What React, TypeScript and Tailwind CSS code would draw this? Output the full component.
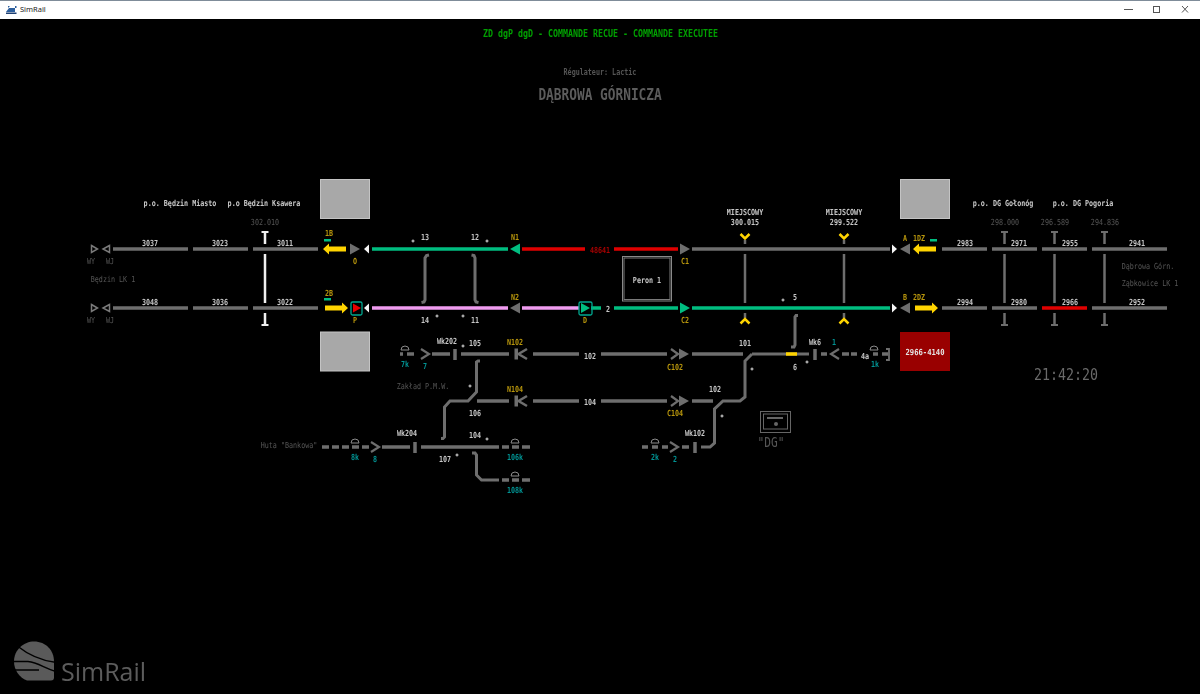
const TRACK = '#6e6e6e'
const GREEN = '#00bd80'
const PINK = '#f09cf0'
const RED = '#e00000'
const YEL = '#ffd400'
const GOLD = '#b8960c'
const TEAL = '#009494'
const DIM = '#565656'
const LIGHT = '#c8c8c8'

// x1, x2, y, colour
const segments: [number, number, number, string][] = [
  [113, 188, 249, TRACK], [193, 248, 249, TRACK], [253, 318, 249, TRACK],
  [113, 188, 308, TRACK], [193, 248, 308, TRACK], [253, 318, 308, TRACK],
  [372, 508, 249, GREEN], [522, 585, 249, RED], [614, 678, 249, RED], [692, 890, 249, TRACK],
  [372, 508, 308, PINK], [522, 579, 308, PINK], [591, 601, 308, GREEN], [614, 678, 308, GREEN], [692, 890, 308, GREEN],
  [942, 987, 249, TRACK], [992, 1037, 249, TRACK], [1042, 1087, 249, TRACK], [1092, 1167, 249, TRACK],
  [942, 987, 308, TRACK], [992, 1037, 308, TRACK], [1042, 1087, 308, RED], [1092, 1167, 308, TRACK],
  [432, 450, 354, TRACK], [461, 509, 354, TRACK], [533, 579, 354, TRACK], [601, 667, 354, TRACK], [692, 743, 354, TRACK],
  [477, 509, 401, TRACK], [533, 579, 401, TRACK], [601, 667, 401, TRACK], [692, 713, 401, TRACK],
  [382, 410, 447, TRACK], [421, 499, 447, TRACK], [682, 689, 447, TRACK],
  // dashes
  [400, 403, 354, TRACK], [407, 414, 354, TRACK],
  [322, 329, 447, TRACK], [332, 339, 447, TRACK], [342, 349, 447, TRACK], [352, 359, 447, TRACK], [362, 369, 447, TRACK],
  [502, 509, 447, TRACK], [512, 519, 447, TRACK], [522, 530, 447, TRACK],
  [502, 509, 480, TRACK], [512, 519, 480, TRACK], [522, 530, 480, TRACK],
  [642, 648, 447, TRACK], [652, 658, 447, TRACK], [662, 668, 447, TRACK],
  [821, 827, 354, TRACK], [842, 849, 354, TRACK], [851, 857, 354, TRACK], [873, 878, 354, TRACK], [882, 888, 354, TRACK],
]

const curves = [
  'M429 255 L426.500 255.500 L425 258 V300 L424 302 L421.500 302.500',
  'M471.500 255 L474 255.500 L475 258 V300 L476 302 L478.500 302.500',
  'M752 354 H809 M752 354 L745 361 V397 L740 401 H723 L714.500 409 V443 L710 447 H701',
  'M480 361 H478 L476.500 362 V392 L468 401 H450 L444.500 407 V437 L443 438.500 H441',
  'M472 453 H475 L476.500 455 V475 L481.500 480 H499',
  'M798 315.500 H796 L795 317 V345 L794 347 H791',
]

// x1, y1, x2, y2 for the plain vertical / cross bars
const bars: [number, number, number, number, string, number][] = [
  [455, 349, 455, 360, TRACK, 3.5], [415, 442, 415, 453, TRACK, 3.5], [695, 442, 695, 453, TRACK, 3.5], [815, 349, 815, 360, TRACK, 3.5],
  [745, 254, 745, 303, TRACK, 2.5], [844, 254, 844, 303, TRACK, 2.5],
  [745, 240, 745, 244, TRACK, 2.5], [844, 240, 844, 244, TRACK, 2.5],
  [745, 313, 745, 318, TRACK, 2.5], [844, 313, 844, 318, TRACK, 2.5],
]

// x, y, text, colour, optional horizontal squeeze
const labels: [number, number, string, string, number?][] = [
  [180, 203, 'p.o. Będzin Miasto', LIGHT], [264, 203, 'p.o Będzin Ksawera', LIGHT],
  [265, 222, '302.010', DIM],
  [1003, 203, 'p.o. DG Gołonóg', LIGHT], [1083, 203, 'p.o. DG Pogoria', LIGHT],
  [1005, 222, '298.000', DIM], [1055, 222, '296.589', DIM], [1105, 222, '294.836', DIM],
  [91, 261, 'WY', DIM], [110, 261, 'WJ', DIM], [91, 320, 'WY', DIM], [110, 320, 'WJ', DIM],
  [113, 279, 'Będzin LK 1', DIM],
  [1148, 266, 'Dąbrowa Górn.', DIM], [1150, 283, 'Ząbkowice LK 1', DIM],
  [150, 243, '3037', LIGHT], [220, 243, '3023', LIGHT], [285, 243, '3011', LIGHT],
  [150, 302, '3048', LIGHT], [220, 302, '3036', LIGHT], [285, 302, '3022', LIGHT],
  [965, 243, '2983', LIGHT], [1019, 243, '2971', LIGHT], [1070, 243, '2955', LIGHT], [1137, 243, '2941', LIGHT],
  [965, 302, '2994', LIGHT], [1019, 302, '2980', LIGHT], [1070, 302, '2966', LIGHT], [1137, 302, '2952', LIGHT],
  [329, 233, '1B', GOLD], [329, 293, '2B', GOLD], [355, 261, 'O', GOLD], [355, 320, 'P', GOLD],
  [515, 237, 'N1', GOLD], [515, 297, 'N2', GOLD], [585, 320, 'D', GOLD], [685, 261, 'C1', GOLD], [685, 320, 'C2', GOLD],
  [905, 238, 'A', GOLD], [919, 238, '1DZ', GOLD], [905, 297, 'B', GOLD], [919, 297, '2DZ', GOLD],
  [425, 237, '13', LIGHT], [475, 237, '12', LIGHT], [425, 320, '14', LIGHT], [475, 320, '11', LIGHT],
  [600, 250, '48641', '#a80000'], [608, 309, '2', LIGHT], [795, 297, '5', LIGHT],
  [647, 280, 'Peron 1', LIGHT],
  [745, 212, 'MIEJSCOWY', LIGHT], [745, 222, '300.015', LIGHT], [844, 212, 'MIEJSCOWY', LIGHT], [844, 222, '299.522', LIGHT],
  [447, 341, 'Wk202', LIGHT], [475, 343, '105', LIGHT], [515, 342, 'N102', GOLD], [515, 389, 'N104', GOLD],
  [405, 364, '7k', TEAL], [425, 366, '7', TEAL],
  [423, 386, 'Zakład P.M.W.', DIM], [475, 413, '106', LIGHT],
  [289, 445, 'Huta "Bankowa"', DIM], [407, 433, 'Wk204', LIGHT], [475, 435, '104', LIGHT], [445, 459, '107', LIGHT],
  [355, 457, '8k', TEAL], [375, 459, '8', TEAL], [515, 457, '106k', TEAL], [515, 490, '108k', TEAL],
  [590, 356, '102', LIGHT], [590, 402, '104', LIGHT], [675, 367, 'C102', GOLD], [675, 413, 'C104', GOLD],
  [745, 343, '101', LIGHT], [715, 389, '102', LIGHT], [695, 433, 'Wk102', LIGHT],
  [655, 457, '2k', TEAL], [675, 459, '2', TEAL],
  [815, 342, 'Wk6', LIGHT], [834, 342, '1', TEAL], [795, 367, '6', LIGHT], [865, 356, '4a', LIGHT], [875, 364, '1k', TEAL],
  [925, 352, '2966-4140', '#e6e6e6', 0.87],
]

const dots = [
  [413, 241], [487, 241], [437, 316], [463, 316], [783, 300], [463, 346], [470, 386], [487, 439], [457, 455],
  [752, 369], [722, 416], [807, 362],
]

const domes = [[405, 350], [355, 443], [515, 443], [515, 476], [655, 443], [874, 350]]

function Tri({ x, y, dir, w = 10, h = 11, fill }: { x: number; y: number; dir: 'l' | 'r'; w?: number; h?: number; fill: string }) {
  const pts = dir === 'r' ? `${x},${y - h / 2} ${x + w},${y} ${x},${y + h / 2}` : `${x + w},${y - h / 2} ${x},${y} ${x + w},${y + h / 2}`
  return <polygon points={pts} fill={fill} />
}

function Arrow({ x1, x2, y, dir }: { x1: number; x2: number; y: number; dir: 'l' | 'r' }) {
  const pts =
    dir === 'l'
      ? `${x1},${y} ${x1 + 6},${y - 5.500} ${x1 + 6},${y - 2.500} ${x2},${y - 2.500} ${x2},${y + 2.500} ${x1 + 6},${y + 2.500} ${x1 + 6},${y + 5.500}`
      : `${x2},${y} ${x2 - 6},${y - 5.500} ${x2 - 6},${y - 2.500} ${x1},${y - 2.500} ${x1},${y + 2.500} ${x2 - 6},${y + 2.500} ${x2 - 6},${y + 5.500}`
  return <polygon points={pts} fill={YEL} />
}

function Chevron({ x, y, dir }: { x: number; y: number; dir: 'l' | 'r' }) {
  const d = dir === 'r' ? `M${x} ${y - 5} L${x + 8} ${y} L${x} ${y + 5}` : `M${x + 8} ${y - 5} L${x} ${y} L${x + 8} ${y + 5}`
  return <path d={d} fill="none" stroke={TRACK} strokeWidth={2.200} />
}

function TSign({ x, color }: { x: number; color: string }) {
  return (
    <g stroke={color} fill="none">
      <path d={`M${x - 3.500} 232 H${x + 3.500}`} strokeWidth={2} />
      <path d={`M${x} 232 V244 M${x} 254 V303 M${x} 313 V325`} strokeWidth={2.500} />
      <path d={`M${x - 3.500} 325 H${x + 3.500}`} strokeWidth={2} />
    </g>
  )
}

// the target font is tall and narrow, so squeeze a larger size horizontally
function Label({ x, y, fill, size = 8.300, squeeze = 0.81, bold = true, children }: { x: number; y: number; fill: string; size?: number; squeeze?: number; bold?: boolean; children: string }) {
  return (
    <text
      transform={`translate(${x} ${y}) scale(${squeeze} 1)`}
      fill={fill}
      fontSize={size}
      fontWeight={bold ? 600 : 400}
      textAnchor="middle"
      dominantBaseline="central"
    >
      {children}
    </text>
  )
}

function Diagram() {
  return (
    <svg className="absolute left-0 top-0 font-['DejaVu_Sans_Mono',monospace] will-change-transform" width={1200} height={675} viewBox="0 19 1200 675">
      {/* grey and red panels */}
      <rect x={320.500} y={179.500} width={49} height={39} fill="#a8a8a8" stroke="#c4c4c4" />
      <rect x={320.500} y={332} width={49} height={39} fill="#a8a8a8" stroke="#c4c4c4" />
      <rect x={900.500} y={179.500} width={49} height={39} fill="#a8a8a8" stroke="#c4c4c4" />
      <rect x={900} y={332} width={50} height={39} fill="#990000" />

      <rect x={622.500} y={256.500} width={49} height={44.500} fill="none" stroke="#8a8a8a" strokeWidth={1} />
      <rect x={624} y={258} width={46} height={41.500} fill="none" stroke="#7a7a7a" strokeWidth={1} />

      {segments.map(([x1, x2, y, c], i) => (
        <rect key={i} x={x1} y={y - 1.750} width={x2 - x1} height={3.500} fill={c} />
      ))}
      {curves.map((d) => (
        <path key={d} d={d} fill="none" stroke={TRACK} strokeWidth={3} />
      ))}
      <rect x={786} y={352.250} width={11} height={3.500} fill={YEL} />
      {bars.map(([x1, y1, x2, y2, c, w], i) => (
        <line key={i} x1={x1} y1={y1} x2={x2} y2={y2} stroke={c} strokeWidth={w} />
      ))}

      {/* track circuit signs */}
      <path d="M261.500 232 H268.500 M261.500 325 H268.500" stroke="#f0f0f0" strokeWidth={2} />
      <path d="M265 232 V244 M265 254 V303 M265 313 V325" stroke="#f0f0f0" strokeWidth={2.500} />
      <TSign x={1004.500} color={TRACK} />
      <TSign x={1054.500} color={TRACK} />
      <TSign x={1104.500} color={TRACK} />

      {/* WY / WJ outlined triangles */}
      {[249, 308].map((y) => (
        <g key={y} fill="none" stroke="#7a7a7a" strokeWidth={1.500}>
          <polygon points={`${91.500},${y - 3.500} ${97.500},${y} ${91.500},${y + 3.500}`} />
          <polygon points={`${109.500},${y - 3.500} ${103},${y} ${109.500},${y + 3.500}`} />
        </g>
      ))}

      {/* signals */}
      <Arrow x1={323} x2={346} y={249} dir="l" />
      <Arrow x1={325} x2={348} y={308} dir="r" />
      <Arrow x1={913} x2={936} y={249} dir="l" />
      <Arrow x1={915} x2={938} y={308} dir="r" />
      <rect x={324} y={239} width={7} height={2.500} fill={GREEN} />
      <rect x={324} y={298} width={7} height={2.500} fill={GREEN} />
      <rect x={930} y={239} width={7} height={2.500} fill={GREEN} />

      <Tri x={350} y={249} dir="r" fill={TRACK} />
      <Tri x={353} y={308} dir="r" w={8} h={9} fill="#e80000" />
      <rect x={351} y={302} width={11} height={13} rx={1.500} fill="none" stroke="#00a890" strokeWidth={1.300} />
      <Tri x={364} y={249} dir="l" w={5} h={9} fill="#f4f4f4" />
      <Tri x={364} y={308} dir="l" w={5} h={9} fill="#f4f4f4" />
      <Tri x={510} y={249} dir="l" fill={GREEN} />
      <Tri x={510} y={308} dir="l" fill={TRACK} />
      <Tri x={581} y={308} dir="r" w={9} h={10} fill={GREEN} />
      <rect x={579} y={302} width={13} height={13} rx={1.500} fill="none" stroke="#00a890" strokeWidth={1.300} />
      <Tri x={680} y={249} dir="r" fill={TRACK} />
      <Tri x={680} y={308} dir="r" fill={GREEN} />
      <Tri x={892} y={249} dir="r" w={5} h={9} fill="#f4f4f4" />
      <Tri x={892} y={308} dir="r" w={5} h={9} fill="#f4f4f4" />
      <Tri x={900} y={249} dir="l" fill={TRACK} />
      <Tri x={900} y={308} dir="l" fill={TRACK} />

      {/* MIEJSCOWY Y marks */}
      {[745, 844].map((x) => (
        <g key={x} fill="none" stroke={YEL} strokeWidth={2.500}>
          <path d={`M${x - 4.500} 234 L${x} 238.500 L${x + 4.500} 234`} />
          <path d={`M${x - 4.500} 323.500 L${x} 319 L${x + 4.500} 323.500`} />
        </g>
      ))}

      {/* shunting chevrons and K marks */}
      <Chevron x={421} y={354} dir="r" />
      <Chevron x={371} y={447} dir="r" />
      <Chevron x={670} y={447} dir="r" />
      <Chevron x={831} y={354} dir="l" />
      {[354, 401].map((y) => (
        <g key={y}>
          <rect x={514.500} y={y - 5.500} width={3.500} height={11} fill={TRACK} />
          <path d={`M527 ${y - 5} L518.500 ${y} L527 ${y + 5}`} fill="none" stroke={TRACK} strokeWidth={2.500} />
          <path d={`M671 ${y - 5} L678 ${y} L671 ${y + 5}`} fill="none" stroke={TRACK} strokeWidth={2.200} />
          <Tri x={679} y={y} dir="r" fill={TRACK} />
        </g>
      ))}
      <path d="M886 349 H889 V360 H886" fill="none" stroke={TRACK} strokeWidth={1.800} />

      {/* shunting domes */}
      {domes.map(([x, y]) => (
        <path key={`${x}-${y}`} d={`M${x - 4} ${y} A4 4 0 0 1 ${x + 4} ${y} Z`} fill="none" stroke="#8a8a8a" strokeWidth={1} />
      ))}

      {dots.map(([x, y]) => (
        <path key={`${x}-${y}`} d={`M${x - 1.500} ${y} H${x + 1.500} M${x} ${y - 1.500} V${y + 1.500}`} stroke="#e0e0e0" strokeWidth={1} />
      ))}

      {/* DG panel */}
      <rect x={760.500} y={411.500} width={30} height={21} fill="none" stroke="#666666" />
      <rect x={763.500} y={414} width={24} height={15} fill="none" stroke="#666666" />
      <rect x={767} y={417} width={16} height={2} fill="#666666" />
      <circle cx={776} cy={424} r={2} fill="#666666" />
      <Label x={771} y={442} fill={DIM} size={14} squeeze={0.8} bold={false}>{'"DG"'}</Label>

      {labels.map(([x, y, t, c, s], i) => (
        <Label key={i} x={x} y={y} fill={c} squeeze={s} bold={c !== DIM}>
          {t}
        </Label>
      ))}

      <Label x={1066} y={375} fill="#6a6a6a" size={15.500} squeeze={0.86} bold={false}>21:42:20</Label>
    </svg>
  )
}

function TitleBar() {
  return (
    <div className="flex h-[19px] shrink-0 items-center border-t border-[#7f8c99] bg-white pl-[6px] font-['Noto_Sans',sans-serif] text-[7.500px] text-[#222222]">
      <svg width={11} height={10} viewBox="0 0 11 10" className="mr-[3px]">
        <path d="M0 7 L3 3 H10.500 V1 H4 L2 3 V1 H9 V7 Z" fill="#2c5f9e" />
        <rect x={0} y={7.500} width={10.500} height={1.500} fill="#1d3f73" />
      </svg>
      <span>SimRail</span>
      <div className="ml-auto flex h-full items-center">
        <svg width={84} height={18} viewBox="1116 1 84 18">
          <path d="M1124 9.500 H1133" stroke="#555555" strokeWidth={1} />
          <rect x={1153.500} y={6.500} width={6} height={6} fill="none" stroke="#555555" />
          <path d="M1182 6 L1188 12.500 M1188 6 L1182 12.500" stroke="#555555" strokeWidth={1} />
        </svg>
      </div>
    </div>
  )
}

function Logo() {
  return (
    <div className="absolute bottom-[13px] left-[13px] flex items-end font-['Open_Sans',sans-serif] text-[25px] leading-[25px] text-[#5c5c5c]">
      <svg width={42} height={40} viewBox="12 641.500 42 40" className="mr-[6px]">
        <path d="M26 681 C18 678 13 670 13 662 C13 650 23 642 33 642 C45 642 53 651 53 662 V678 C53 680 52 681 50 681 Z" fill="#5a5a5a" />
        <path d="M17 647 C27 655 40 661 55 663" fill="none" stroke="#000000" strokeWidth={1.500} />
        <path d="M11 662 H27 C37 663 44 669 55 672" fill="none" stroke="#000000" strokeWidth={1.500} />
        <path d="M13 670.500 H38" fill="none" stroke="#000000" strokeWidth={1.500} />
      </svg>
      <span className="mb-[-3px]">SimRail</span>
    </div>
  )
}

export default function App() {
  return (
    <div className="flex h-[694px] w-[1200px] flex-col overflow-hidden bg-black">
      <TitleBar />
      <main className="relative flex-1 font-['DejaVu_Sans_Mono',monospace]">
        <Diagram />
        <div className="relative flex flex-col items-center pt-[10px] will-change-transform">
          <p className="scale-x-[0.83] text-[10px] font-semibold leading-[10px] text-[#00a000]">ZD dgP dgD - COMMANDE RECUE - COMMANDE EXECUTEE</p>
          <p className="mt-[28px] scale-x-[0.81] text-[8.300px] font-semibold leading-[10px] text-[#555555]">Régulateur: Lactic</p>
          <p className="mt-[8px] scale-x-[0.8] text-[16px] font-bold leading-[20px] text-[#5c5c5c]">DĄBROWA GÓRNICZA</p>
        </div>
        <Logo />
      </main>
    </div>
  )
}
